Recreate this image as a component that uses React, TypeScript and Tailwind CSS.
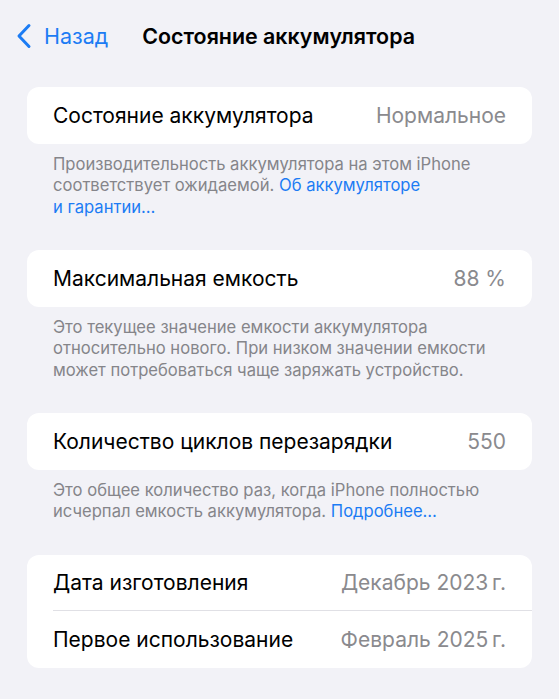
import { ReactNode } from 'react';

interface Row {
  label: string;
  value: string;
}

function Card({ rows }: { rows: Row[] }) {
  return (
    <div className="mx-[27px] rounded-[12px] bg-white">
      {rows.map((row, i) => (
        <div key={row.label} className="pl-[26px]">
          <div
            className={`flex h-[56.5px] items-center justify-between pr-[26px] ${
              i < rows.length - 1 ? 'border-b border-[#e0e0e5]' : ''
            }`}
          >
            <span className="text-[21px] text-black">{row.label}</span>
            <span className="text-[21px] text-[#8a8a8e]">{row.value}</span>
          </div>
        </div>
      ))}
    </div>
  );
}

function Footer({ children }: { children: ReactNode }) {
  return (
    <p className="pl-[53px] pr-[50px] pt-[10px] text-[16.6px] leading-[21.5px] text-[#85858a]">
      {children}
    </p>
  );
}

export default function App() {
  return (
    <div
      className="min-h-[699px] w-full bg-[#f2f2f7] pb-[30px]"
      style={{ fontFamily: 'Inter, "Noto Sans", sans-serif' }}
    >
      {/* navigation bar */}
      <div className="flex h-[74px] items-center pb-[2px]">
        <div className="flex items-center pl-[16px] text-[#1c7cf4]">
          <svg width="16" height="26" viewBox="0 0 16 26" fill="none">
            <path
              d="M13 2.5L3 13l10 10.5"
              stroke="currentColor"
              strokeWidth="3"
              strokeLinecap="round"
              strokeLinejoin="round"
            />
          </svg>
          <span className="ml-[12px] text-[21.5px]">Назад</span>
        </div>
        <h1 className="ml-[34px] text-[21.4px] font-semibold text-black">
          Состояние аккумулятора
        </h1>
      </div>

      <div className="mt-[13px]">
        <Card rows={[{ label: 'Состояние аккумулятора', value: 'Нормальное' }]} />
        <Footer>
          Производительность аккумулятора на этом iPhone соответствует ожидаемой.{' '}
          <span className="text-[#1c7cf4]">Об аккумуляторе и&nbsp;гарантии…</span>
        </Footer>
      </div>

      <div className="mt-[32px]">
        <Card rows={[{ label: 'Максимальная емкость', value: '88 %' }]} />
        <Footer>
          Это текущее значение емкости аккумулятора относительно нового. При низком значении
          емкости может потребоваться чаще заряжать устройство.
        </Footer>
      </div>

      <div className="mt-[32px]">
        <Card rows={[{ label: 'Количество циклов перезарядки', value: '550' }]} />
        <Footer>
          Это общее количество раз, когда iPhone полностью исчерпал емкость аккумулятора.{' '}
          <span className="text-[#1c7cf4]">Подробнее…</span>
        </Footer>
      </div>

      <div className="mt-[32px]">
        <Card
          rows={[
            { label: 'Дата изготовления', value: 'Декабрь 2023\u202Fг.' },
            { label: 'Первое использование', value: 'Февраль 2025\u202Fг.' },
          ]}
        />
      </div>
    </div>
  );
}
